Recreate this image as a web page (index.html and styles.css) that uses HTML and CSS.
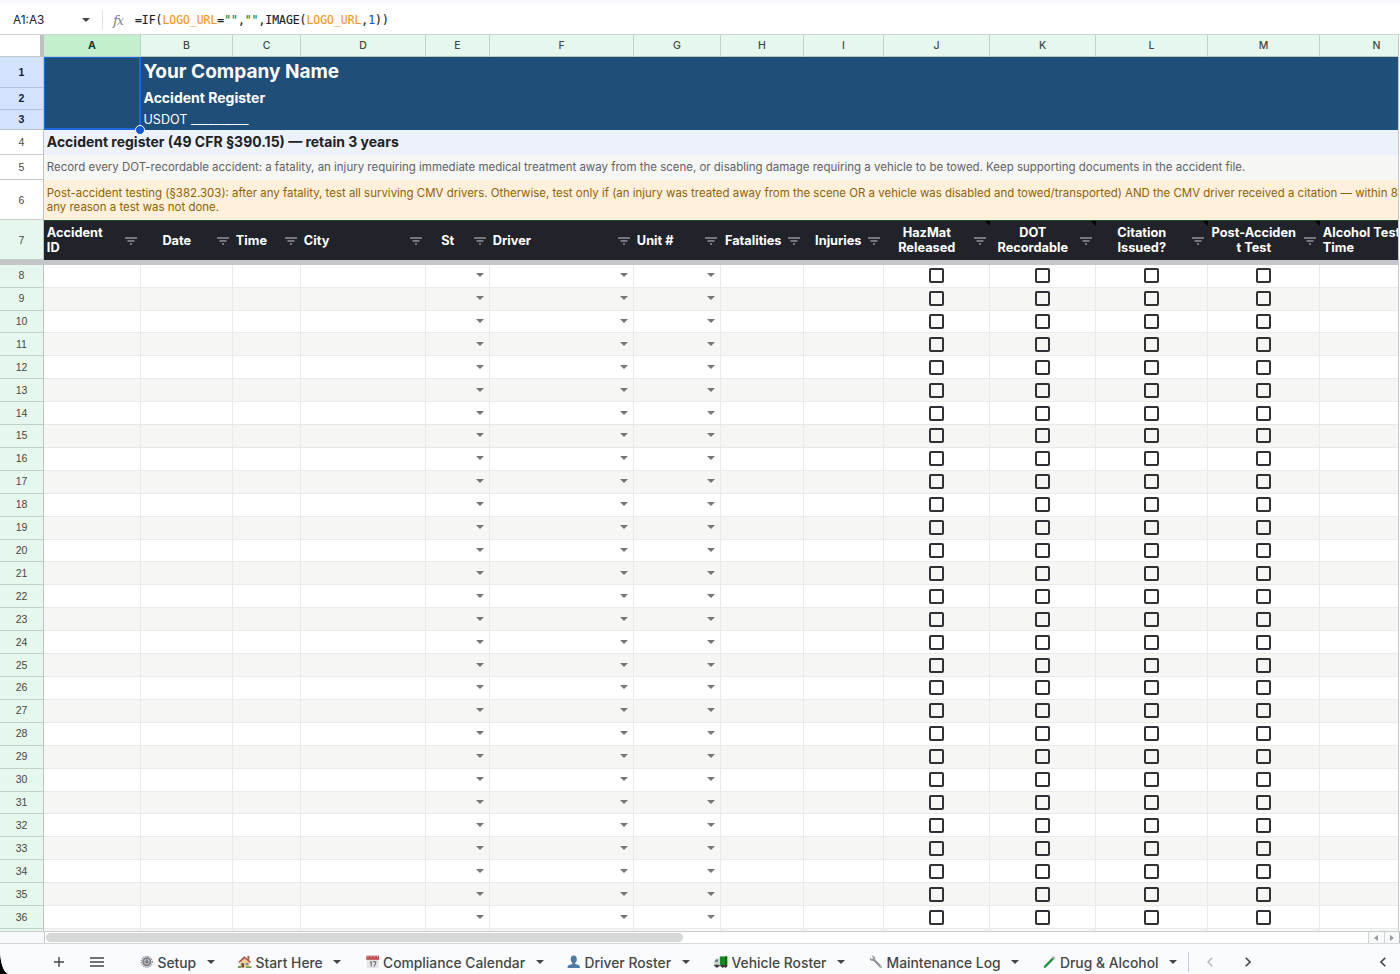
FILE: index.html
```html
<!DOCTYPE html>
<html lang="en">
<head>
  <meta charset="UTF-8" />
  <title>Accident Register</title>
  <link rel="stylesheet" href="styles.css">
</head>
<body>
  <svg class="defs" width="0" height="0">
    <symbol id="filter" viewBox="0 0 12 8">
      <path d="M0 1h12M2.5 4h7M5 7h2" fill="none" stroke="#c9cbce" stroke-width="1.2"/>
    </symbol>
    <symbol id="caret" viewBox="0 0 8 4"><path d="M0 0h8L4 4z" fill="currentColor"/></symbol>
  </svg>

  <div class="app">
    <!-- Formula bar -->
    <div class="formula-bar">
      <div class="name-box"><span>A1:A3</span><svg class="caret" width="8" height="4"><use href="#caret"/></svg></div>
      <span class="fx"><i>f</i><i>x</i></span>
      <code class="formula">=IF(<b class="ref">LOGO_URL</b>=<b class="str">""</b>,<b class="str">""</b>,IMAGE(<b class="ref">LOGO_URL</b>,<b class="lit">1</b>))</code>
    </div>

    <div class="sheet">
      <div class="row letters" id="letters"></div>

      <div class="banner">
        <div class="banner-nums">
          <div class="num sel">1</div>
          <div class="num sel">2</div>
          <div class="num sel">3</div>
        </div>
        <div class="logo-cell"><span class="handle"></span></div>
        <div class="banner-text">
          <div class="company">Your Company Name</div>
          <div class="subtitle">Accident Register</div>
          <div class="usdot">USDOT __________</div>
        </div>
      </div>

      <div class="wide title"><div class="num plain">4</div><div class="text">Accident register (49 CFR §390.15) — retain 3 years</div></div>
      <div class="wide note"><div class="num plain">5</div><div class="text">Record every DOT-recordable accident: a fatality, an injury requiring immediate medical treatment away from the scene, or disabling damage requiring a vehicle to be towed. Keep supporting documents in the accident file.</div></div>
      <div class="wide warning"><div class="num plain">6</div><div class="text">Post-accident testing (§382.303): after any fatality, test all surviving CMV drivers. Otherwise, test only if (an injury was treated away from the scene OR a vehicle was disabled and towed/transported) AND the CMV driver received a citation — within 8<br>any reason a test was not done.</div></div>

      <div class="row heads" id="heads"></div>
      <div class="freeze"></div>
      <div class="body-rows" id="rows"></div>
    </div>

    <div class="scroll">
      <div class="scroll-corner"></div>
      <div class="track"><div class="thumb"></div></div>
      <div class="scroll-btn"><svg width="4" height="6"><path d="M4 0v6L0 3z" fill="#999"/></svg></div>
      <div class="scroll-btn"><svg width="4" height="6"><path d="M0 0v6l4-3z" fill="#999"/></svg></div>
      <div class="scroll-end"></div>
    </div>

    <!-- Sheet tabs -->
    <div class="tab-bar">
      <svg class="add" width="10" height="10"><path d="M5 0v10M0 5h10" stroke="#444746" stroke-width="1.4"/></svg>
      <svg class="menu" width="14" height="10"><path d="M0 1h14M0 5h14M0 9h14" stroke="#444746" stroke-width="1.4"/></svg>
      <div class="tabs">
        <div class="tab">
          <svg class="icon" viewBox="0 0 14 14">
            <circle cx="7" cy="7" r="5.7" fill="none" stroke="#8a8e92" stroke-width="1.3" stroke-dasharray="1.3 .94"/>
            <circle cx="7" cy="7" r="3.9" fill="#b9bcbf" stroke="#74787c" stroke-width="1.5"/>
            <circle cx="7" cy="7" r="1.4" fill="#63676b"/>
            <path d="M7 7V3.5M7 7l3 2M7 7L4 9" stroke="#74787c" stroke-width=".7"/>
          </svg>
          <span>Setup</span><svg class="caret" width="8" height="4"><use href="#caret"/></svg>
        </div>
        <div class="tab">
          <svg class="icon" viewBox="0 0 14 14">
            <path d="M9.8 1h2v4h-2z" fill="#a85a3c"/>
            <path d="M2 6.5L7 2.4l5 4.1V13H2z" fill="#f0d49b"/>
            <path d="M.3 7.3L6.5 1.2l7.2 6.1-1 .9-5.8-4.7L1.2 8.2z" fill="#b05540"/>
            <path d="M3.5 8.5h2.8V13H3.5z" fill="#7d4b2e"/>
            <path d="M8 8h2.8v2.6H8z" fill="#5b9bc4"/>
            <path d="M0 11.5h3V13.5H0zM8 12h6v1.5H8z" fill="#6c9a4c"/>
          </svg>
          <span>Start Here</span><svg class="caret" width="8" height="4"><use href="#caret"/></svg>
        </div>
        <div class="tab">
          <svg class="icon" viewBox="0 0 14 14">
            <path d="M.8 3h12.4v10.5H.8z" fill="#e6e4e2"/>
            <path d="M.3.7h13.4V5H.3z" fill="#bd4d50"/>
            <path d="M2 .5v2M5.3.5v2M8.7.5v2M12 .5v2" stroke="#eedada" stroke-width=".8"/>
            <path d="M4.2 7.5l1.2-.8V12M7.2 7h3.2L8.5 12" fill="none" stroke="#55585b" stroke-width="1"/>
          </svg>
          <span>Compliance Calendar</span><svg class="caret" width="8" height="4"><use href="#caret"/></svg>
        </div>
        <div class="tab">
          <svg class="icon" viewBox="0 0 14 14">
            <ellipse cx="7" cy="4.3" rx="3.1" ry="3.9" fill="#4c7ca5"/>
            <path d="M5.5 7h3v2.3l4 1.3q1 .5 1 3H.5q0-2.5 1-3l4-1.3z" fill="#4c7ca5"/>
          </svg>
          <span>Driver Roster</span><svg class="caret" width="8" height="4"><use href="#caret"/></svg>
        </div>
        <div class="tab">
          <svg class="icon" viewBox="0 0 14 14">
            <path d="M6 1.5h7.7V11H6z" fill="#138a1c"/>
            <path d="M11.3 1.5h2.4V11h-2.4z" fill="#08700f"/>
            <path d="M0 11V7l1.6-3.2h4V11z" fill="#c9cfcc"/>
            <path d="M1 7l1-2.4h2V7z" fill="#54727e"/>
            <path d="M0 10.2h13.7v1.5H0z" fill="#5d6664"/>
            <circle cx="3" cy="11.7" r="1.5" fill="#333"/><circle cx="9" cy="11.7" r="1.5" fill="#333"/><circle cx="12" cy="11.7" r="1.5" fill="#333"/>
          </svg>
          <span>Vehicle Roster</span><svg class="caret" width="8" height="4"><use href="#caret"/></svg>
        </div>
        <div class="tab">
          <svg class="icon" viewBox="0 0 14 14">
            <path d="M4.5 4.5l7.8 7.8" stroke="#8d9196" stroke-width="2.3" stroke-linecap="round"/>
            <path d="M1 2.5l2 1.9L4.600 3 2.800.8Q6-.2 6.500 4.500 5 7.300 1.800 5.800.4 4.600 1 2.500z" fill="#989ca1"/>
            <circle cx="12" cy="12" r=".7" fill="#eee"/>
          </svg>
          <span>Maintenance Log</span><svg class="caret" width="8" height="4"><use href="#caret"/></svg>
        </div>
        <div class="tab">
          <svg class="icon" viewBox="0 0 14 14">
            <path d="M2 12.2l9.300-9.500" stroke="#b9c4bd" stroke-width="2.600" stroke-linecap="round"/>
            <path d="M2 12.200l7.800-8" stroke="#229639" stroke-width="2.300" stroke-linecap="round"/>
            <path d="M9.700 1.500l2.800 2.700" stroke="#a9aeb0" stroke-width="1.200"/>
          </svg>
          <span>Drug &amp; Alcohol</span><svg class="caret" width="8" height="4"><use href="#caret"/></svg>
        </div>
      </div>
      <div class="tab-nav">
        <svg width="6" height="10"><path d="M5.300.8L1 5l4.300 4.200" fill="none" stroke="#b4b7ba" stroke-width="1.400"/></svg>
        <svg width="6" height="10"><path d="M.7.8L5 5 .7 9.200" fill="none" stroke="#444746" stroke-width="1.600"/></svg>
        <svg class="side" width="6" height="10"><path d="M5.300.8L1 5l4.300 4.200" fill="none" stroke="#444746" stroke-width="1.600"/></svg>
      </div>
    </div>
  </div>

  <script>
    const columns = [
      { id: "A", head: "Accident<br>ID", align: "left" },
      { id: "B", head: "Date", align: "center" },
      { id: "C", head: "Time", align: "left" },
      { id: "D", head: "City", align: "left" },
      { id: "E", head: "St", align: "center", type: "list" },
      { id: "F", head: "Driver", align: "left", type: "list" },
      { id: "G", head: "Unit #", align: "left", type: "list" },
      { id: "H", head: "Fatalities", align: "right" },
      { id: "I", head: "Injuries", align: "right" },
      { id: "J", head: "HazMat<br>Released", align: "center", type: "check" },
      { id: "K", head: "DOT<br>Recordable", align: "center", type: "check" },
      { id: "L", head: "Citation<br>Issued?", align: "center", type: "check" },
      { id: "M", head: "Post-Acciden<br>t Test", align: "center", type: "check" },
      { id: "N", head: "Alcohol Test<br>Time", align: "left" }
    ];

    document.getElementById("letters").innerHTML = '<div class="corner"></div>' +
      columns.map(c => `<div class="letter${c.id === "A" ? " active" : ""}">${c.id}</div>`).join("");

    document.getElementById("heads").innerHTML = '<div class="num">7</div>' +
      columns.map(c => `<div class="head ${c.align}${c.type === "check" ? " noted" : ""}">
        <span>${c.head}</span><svg class="filter" width="12" height="8"><use href="#filter"/></svg></div>`).join("");

    function cell(c) {
      if (c.type === "list") return '<div class="cell list"><svg width="8" height="4"><use href="#caret"/></svg></div>';
      if (c.type === "check") return '<div class="cell check"><span class="box"></span></div>';
      return '<div class="cell"></div>';
    }

    // row 37 is only peeking out above the scrollbar
    let html = "";
    for (let n = 8; n <= 37; n++) {
      html += `<div class="row data"><div class="num">${n < 37 ? n : ""}</div>${columns.map(cell).join("")}</div>`;
    }
    document.getElementById("rows").innerHTML = html;
  </script>
</body>
</html>
```
FILE: styles.css
```css
* { box-sizing: border-box; margin: 0; padding: 0; }
body {
  background: #000;
  font-family: "Inter", sans-serif;
  color: #202124;
}
.defs { position: absolute; }
svg { display: block; flex: none; }
.app {
  width: 1400px; height: 974px;
  display: flex; flex-direction: column;
  background: #fff;
  overflow: hidden;
  border-bottom-left-radius: 9px 25px;
}

/* formula bar */
.formula-bar {
  height: 35px; flex: none;
  display: flex; align-items: center;
  padding-top: 5px;
  background: linear-gradient(#f6f7fd, #fff 8px);
  border-bottom: 1px solid #d0d2d4;
}
.name-box {
  width: 103px; height: 20px;
  display: flex; align-items: center; justify-content: space-between;
  padding: 0 12px 0 13px;
  border-right: 1px solid #e0e2e4;
  font-size: 11.8px;
  color: #202124;
}
.caret { color: #444746; }
.fx {
  width: 32px;
  padding-left: 10px;
  font-family: "DejaVu Serif", serif;
  font-size: 13.5px;
  color: #808386;
}
.fx i:last-child { font-size: 12px; margin-left: -1px; }
.formula {
  font-family: "DejaVu Sans Mono", monospace;
  font-size: 11.4px;
  white-space: pre;
  -webkit-text-stroke: .15px currentColor;
}
.formula b { font-weight: 400; }
.ref { color: #f7981d; }
.str { color: #188038; }
.lit { color: #1155cc; }

/* sheet */
.sheet {
  height: 896px; flex: none;
  width: 1399px;
  overflow: hidden;
  border-right: 1px solid #c8cacc;
}
.row {
  display: grid;
  grid-template-columns: 44px 97px 92px 68px 125px 64px 144px 87px 83px 80px 106px 106px 112px 112px 114px;
}
.letters { height: 22px; }
.corner {
  background: #fff;
  border-right: 4px solid #bdbfc1;
  border-bottom: 1px solid #c4c7c9;
}
.letter {
  display: flex; align-items: center; justify-content: center;
  padding-bottom: 1px;
  background: #e6f8ed;
  border-right: 1px solid #c3d0c8;
  border-bottom: 1px solid #b9c9c0;
  font-size: 10.5px; font-weight: 500;
  color: #444746;
}
.letter.active { background: #c4efcf; font-weight: 700; color: #1f3a2b; }
.num {
  display: flex; align-items: center; justify-content: center;
  background: #e6f8ed;
  border-right: 1px solid #c0c4c2;
  border-bottom: 1px solid #bfd0c6;
  font-family: "Liberation Sans", sans-serif;
  font-size: 10.5px;
  color: #444746;
}
.num.plain { background: #fff; border-bottom-color: #c8cacc; }
.num.sel {
  background: #d3e3fd;
  border-bottom-color: #b4c3dc;
  font-weight: 700; color: #0b1f3f;
}

.banner {
  display: grid;
  grid-template-columns: 44px 97px 1fr;
  height: 73px;
  background: #1f4e79;
  color: #fff;
}
.banner-nums, .banner-text { display: grid; grid-template-rows: 31px 21.5px 20.5px; }
.logo-cell {
  position: relative;
  border: 2px solid #1d68dc;
  border-top-width: 1px;
  border-left-width: 1px;
}
.handle {
  position: absolute;
  right: -6px; bottom: -7px;
  width: 10px; height: 10px;
  border-radius: 50%;
  background: #0b57d0;
  border: 1px solid #fff;
  z-index: 1;
}
.banner-text { padding-left: 2.5px; align-items: center; }
.company { font-size: 19.05px; font-weight: 700; line-height: 24px; padding-bottom: 2px; }
.subtitle { font-size: 14px; font-weight: 700; line-height: 18px; padding-bottom: 2px; }
.usdot { font-size: 12.6px; line-height: 16px; }

.wide { display: grid; grid-template-columns: 44px 1fr; }
.wide .text {
  padding-left: 2.8px;
  white-space: nowrap;
  overflow: hidden;
}
.title { height: 25px; }
.title .text { background: #edf2fa; font-size: 13.98px; font-weight: 700; line-height: 23px; }
.note { height: 25px; }
.note .text { background: #f6f6f5; font-size: 11.475px; line-height: 25px; color: #5f6368; }
.warning { height: 40px; }
.warning .text {
  padding-top: 7px;
  background: #fef0db;
  font-size: 11.465px; line-height: 13.5px;
  color: #8f6208;
}

.heads { height: 40px; }
.head {
  position: relative;
  display: flex; align-items: center;
  padding: 0 4.5px 1px 2.8px;
  background: #202329;
  border-top: 1px solid #1c4a2a;
  color: #fff;
  font-size: 12.75px; font-weight: 700; line-height: 15px;
  white-space: nowrap;
}
.head span { flex: 1; }
.head.center span { text-align: center; }
.head.center { padding-left: 0; }
.head.right span { text-align: right; padding-right: 6px; }
.head.center .filter, .head.left .filter { margin-left: 4px; }
.filter { margin-top: 1px; }
/* note marker in the corner of a header */
.noted::after {
  content: "";
  position: absolute;
  top: 0; right: 0;
  border-top: 5px solid #000;
  border-left: 5px solid transparent;
}
.freeze { height: 4.7px; background: #c5c6c9; }

.data { height: 22.91px; }
.data .num { padding-bottom: 1px; }
.cell {
  display: flex; align-items: center;
  border-right: 1px solid #e9eaea;
  border-bottom: 1px solid #e9eaea;
}
.data:nth-child(even) .cell { background: #f6f6f4; }
.list { justify-content: flex-end; padding: 0 5px 1px 0; color: #747775; }
.check { justify-content: center; }
.box {
  width: 15px; height: 15px;
  border: 2px solid #303134;
  border-radius: 2px;
}

/* scrollbar */
.scroll {
  height: 13px; flex: none;
  display: flex;
  border-top: 1px solid #c9cbcd;
  border-bottom: 1px solid #d4d6d9;
}
.scroll-corner { width: 45px; background: #f8f9fa; border-right: 1px solid #c4c6c8; }
.track { flex: 1; padding: 1px; }
.thumb { width: 637px; height: 9px; border-radius: 5px; background: #d6d7d7; }
.scroll-btn {
  width: 15.5px;
  display: flex; align-items: center; justify-content: center;
  background: #f8f9fa;
  border-left: 1px solid #d0d2d4;
}
.scroll-end { width: 1px; background: #b4b6b8; }

/* tabs */
.tab-bar {
  flex: 1;
  display: flex; align-items: center;
  padding: 6px 14px 0 54px;
  background: #f9fbff;
}
.menu { margin-left: 26px; }
.tabs {
  display: grid;
  grid-template-columns: 98px 127.5px 201.5px 147px 155px 173.5px 135px;
  margin-left: 36px;
}
.tab {
  display: flex; align-items: center;
  font-size: 13.85px; font-weight: 500; line-height: 20px;
  color: #444746;
  white-space: nowrap;
}
.tab span { padding-top: 1px; }
.tab .icon { width: 13.5px; height: 13.5px; margin-right: 4px; }
.tab .caret { margin-left: 10.5px; }
.tab-nav {
  flex: 1; height: 20px;
  display: flex; align-items: center;
  gap: 32px;
  padding-left: 18px;
  margin-left: 10px;
  border-left: 1px solid #c9ccd0;
}
.side { margin-left: auto; }
```
